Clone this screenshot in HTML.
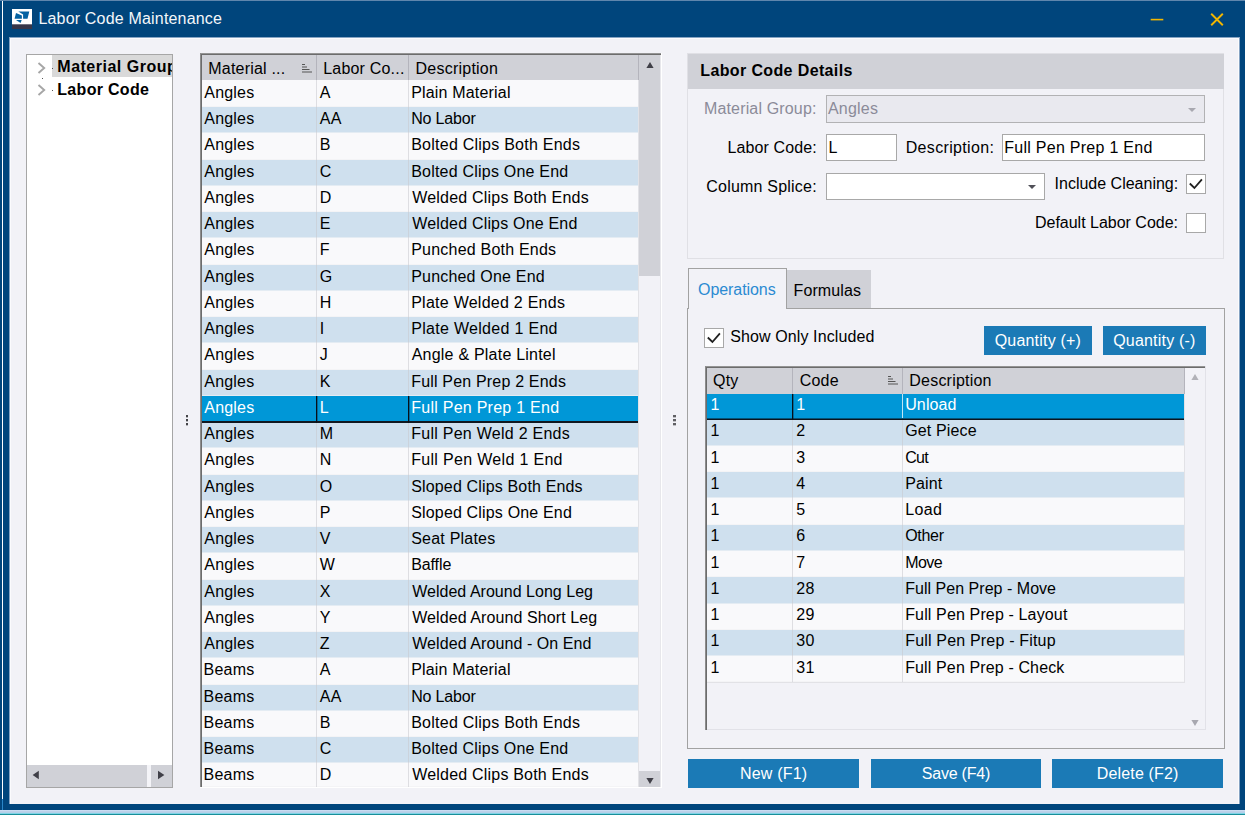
<!DOCTYPE html>
<html><head><meta charset="utf-8"><title>Labor Code Maintenance</title>
<style>
html,body{margin:0;padding:0;}
body{width:1245px;height:815px;overflow:hidden;background:#00457c;position:relative;font-family:"Liberation Sans",sans-serif;font-size:16px;color:#000;}
div{position:absolute;box-sizing:border-box;}
.t{position:absolute;white-space:nowrap;line-height:20px;display:block;letter-spacing:0.2px;}
svg{position:absolute;overflow:visible;}
</style></head><body>

<div style="left:0px;top:0px;width:1245px;height:1px;background:#5f86ad;"></div>
<div style="left:2px;top:1px;width:1px;height:798px;background:#ffffff;"></div>
<div style="left:2px;top:799px;width:1px;height:11px;background:#2a86c8;"></div>
<div style="left:0px;top:810px;width:1245px;height:1px;background:#c9dcf2;"></div>
<div style="left:0px;top:811px;width:1245px;height:1px;background:#bed1ea;"></div>
<div style="left:0px;top:812px;width:1245px;height:1px;background:#b6d0e8;"></div>
<div style="left:0px;top:813px;width:1245px;height:1px;background:#7ed3e6;"></div>
<div style="left:0px;top:814px;width:1245px;height:1px;background:#188e99;"></div>
<div style="left:9px;top:37px;width:1231px;height:767px;background:#86a4c4;"></div>
<div style="left:10px;top:38px;width:1229px;height:766px;background:#f2f2f7;"></div>
<div style="left:10px;top:38px;width:1229px;height:1px;background:#fbfbfd;"></div>
<div style="left:1238px;top:38px;width:1px;height:766px;background:#fbfbfd;"></div>
<div style="left:10px;top:38px;width:1px;height:766px;background:#fbfbfd;"></div>
<div style="left:12px;top:9px;width:20px;height:20px;background:#fff;"></div>
<div style="left:12px;top:24px;width:20px;height:5px;background:linear-gradient(#9a9aa6 0,#363649 1.2px);"></div>
<svg style="left:12px;top:9px" width="20" height="16" viewBox="0 0 20 16"><path d="M4 4 L9.9 6.4 L9.9 9.8 L2.6 9.8 Z" fill="#0562a2"/><path d="M6.3 2.6 L17.3 2.6 L15.5 9.8 L11.1 9.8 L11.1 5.6 Z" fill="#0562a2"/><path d="M4 11.1 L9.7 11.1 L8.6 14 Z" fill="#0562a2"/></svg>
<span class="t" style="left:38.4px;top:8.75px;font-size:16px;color:#f4f7fa;letter-spacing:0.185px;">Labor Code Maintenance</span>
<svg style="left:1150px;top:12px" width="80" height="16" viewBox="0 0 80 16"><path d="M0.7 7.6 H13.3" stroke="#f2b600" stroke-width="1.6" fill="none"/><path d="M61.2 1.8 L72.8 13.2 M72.8 1.8 L61.2 13.2" stroke="#f2b600" stroke-width="1.9" fill="none"/></svg>
<div style="left:26px;top:54px;width:147px;height:734px;background:#fff;border:1px solid #a6a6a6;"></div>
<div style="left:52px;top:55px;width:120px;height:22px;background:#d9d9d9;"></div>
<svg style="left:37px;top:61.7px" width="9" height="12" viewBox="0 0 9 12"><path d="M1.5 1 L7.2 6 L1.5 11" stroke="#a6a6a6" stroke-width="1.9" fill="none"/></svg>
<svg style="left:37px;top:84.3px" width="9" height="12" viewBox="0 0 9 12"><path d="M1.5 1 L7.2 6 L1.5 11" stroke="#a6a6a6" stroke-width="1.9" fill="none"/></svg>
<div style="left:52px;top:68px;width:1px;height:1px;background:#555;"></div>
<div style="left:52px;top:90px;width:1px;height:1px;background:#555;"></div>
<div style="left:42px;top:78px;width:1px;height:1px;background:#555;"></div>
<div style="left:57px;top:55px;width:115px;height:46px;overflow:hidden;">
<span class="t" style="left:0.3px;top:1.75px;font-size:16px;font-weight:bold;letter-spacing:0.5px;">Material Group</span>
<span class="t" style="left:0.3px;top:24.75px;font-size:16px;font-weight:bold;letter-spacing:0.3px;">Labor Code</span>
</div>
<div style="left:27px;top:765px;width:145px;height:22px;background:#d0d1d7;"></div>
<div style="left:147px;top:765px;width:4px;height:22px;background:#f4f4f8;"></div>
<svg style="left:32px;top:770.4px" width="8" height="10" viewBox="0 0 8 10"><path d="M6.8 0.8 L6.8 9.2 L0.6 5 Z" fill="#404048"/></svg>
<svg style="left:157px;top:770.4px" width="8" height="10" viewBox="0 0 8 10"><path d="M1 0.8 L1 9.2 L7.4 5 Z" fill="#404048"/></svg>
<div style="left:186px;top:415px;width:2px;height:2px;background:#454548;"></div>
<div style="left:186px;top:417px;width:2px;height:1px;background:#454548;opacity:.35;"></div>
<div style="left:186px;top:419px;width:2px;height:2px;background:#454548;"></div>
<div style="left:186px;top:421px;width:2px;height:1px;background:#454548;opacity:.35;"></div>
<div style="left:186px;top:423px;width:2px;height:2px;background:#454548;"></div>
<div style="left:186px;top:425px;width:2px;height:1px;background:#454548;opacity:.35;"></div>
<div style="left:673px;top:415px;width:3px;height:2px;background:#606064;"></div>
<div style="left:673px;top:417px;width:3px;height:1px;background:#606064;opacity:.35;"></div>
<div style="left:673px;top:419px;width:3px;height:2px;background:#606064;"></div>
<div style="left:673px;top:421px;width:3px;height:1px;background:#606064;opacity:.35;"></div>
<div style="left:673px;top:423px;width:3px;height:2px;background:#606064;"></div>
<div style="left:673px;top:425px;width:3px;height:1px;background:#606064;opacity:.35;"></div>
<div style="left:200px;top:53px;width:461px;height:734px;background:#f2f2f7;"></div>
<div style="left:661px;top:53px;width:1px;height:735px;background:#fff;"></div>
<div style="left:660px;top:55px;width:1px;height:732px;background:#e7e7eb;"></div>
<div style="left:200px;top:787px;width:462px;height:1px;background:#fff;"></div>
<div style="left:202px;top:55px;width:458px;height:25px;background:#d0d1d7;"></div>
<div style="left:200px;top:53px;width:461px;height:1px;background:#949494;"></div>
<div style="left:200px;top:54px;width:461px;height:1px;background:#6c6c6c;"></div>
<div style="left:200px;top:53px;width:1px;height:734px;background:#8c8c8c;"></div>
<div style="left:201px;top:54px;width:1px;height:733px;background:#6c6c6c;"></div>
<div style="left:202px;top:80px;width:437px;height:27px;background:#f9f9fb;"></div>
<div style="left:202px;top:106px;width:437px;height:1px;background:#f4f4f6;"></div>
<span class="t" style="left:204.3px;top:82.75px;font-size:16px;color:#000;">Angles</span>
<span class="t" style="left:319.8px;top:82.75px;font-size:16px;color:#000;">A</span>
<span class="t" style="left:411.2px;top:82.75px;font-size:16px;color:#000;letter-spacing:0.179px;">Plain Material</span>
<div style="left:202px;top:107px;width:437px;height:26px;background:#cfe0ee;"></div>
<div style="left:202px;top:132px;width:437px;height:1px;background:#e4ecf3;"></div>
<span class="t" style="left:204.3px;top:108.75px;font-size:16px;color:#000;">Angles</span>
<span class="t" style="left:319.8px;top:108.75px;font-size:16px;color:#000;">AA</span>
<span class="t" style="left:411.2px;top:108.75px;font-size:16px;color:#000;letter-spacing:-0.185px;">No Labor</span>
<div style="left:202px;top:133px;width:437px;height:27px;background:#f9f9fb;"></div>
<div style="left:202px;top:159px;width:437px;height:1px;background:#f4f4f6;"></div>
<span class="t" style="left:204.3px;top:134.75px;font-size:16px;color:#000;">Angles</span>
<span class="t" style="left:319.8px;top:134.75px;font-size:16px;color:#000;">B</span>
<span class="t" style="left:411.2px;top:134.75px;font-size:16px;color:#000;letter-spacing:0.245px;">Bolted Clips Both Ends</span>
<div style="left:202px;top:160px;width:437px;height:26px;background:#cfe0ee;"></div>
<div style="left:202px;top:185px;width:437px;height:1px;background:#e4ecf3;"></div>
<span class="t" style="left:204.3px;top:161.75px;font-size:16px;color:#000;">Angles</span>
<span class="t" style="left:319.8px;top:161.75px;font-size:16px;color:#000;">C</span>
<span class="t" style="left:411.2px;top:161.75px;font-size:16px;color:#000;letter-spacing:0.212px;">Bolted Clips One End</span>
<div style="left:202px;top:186px;width:437px;height:26px;background:#f9f9fb;"></div>
<div style="left:202px;top:211px;width:437px;height:1px;background:#f4f4f6;"></div>
<span class="t" style="left:204.3px;top:187.75px;font-size:16px;color:#000;">Angles</span>
<span class="t" style="left:319.8px;top:187.75px;font-size:16px;color:#000;">D</span>
<span class="t" style="left:412.2px;top:187.75px;font-size:16px;color:#000;letter-spacing:0.203px;">Welded Clips Both Ends</span>
<div style="left:202px;top:212px;width:437px;height:26px;background:#cfe0ee;"></div>
<div style="left:202px;top:237px;width:437px;height:1px;background:#e4ecf3;"></div>
<span class="t" style="left:204.3px;top:213.75px;font-size:16px;color:#000;">Angles</span>
<span class="t" style="left:319.8px;top:213.75px;font-size:16px;color:#000;">E</span>
<span class="t" style="left:412.2px;top:213.75px;font-size:16px;color:#000;letter-spacing:0.186px;">Welded Clips One End</span>
<div style="left:202px;top:238px;width:437px;height:27px;background:#f9f9fb;"></div>
<div style="left:202px;top:264px;width:437px;height:1px;background:#f4f4f6;"></div>
<span class="t" style="left:204.3px;top:239.75px;font-size:16px;color:#000;">Angles</span>
<span class="t" style="left:319.8px;top:239.75px;font-size:16px;color:#000;">F</span>
<span class="t" style="left:411.2px;top:239.75px;font-size:16px;color:#000;letter-spacing:0.216px;">Punched Both Ends</span>
<div style="left:202px;top:265px;width:437px;height:26px;background:#cfe0ee;"></div>
<div style="left:202px;top:290px;width:437px;height:1px;background:#e4ecf3;"></div>
<span class="t" style="left:204.3px;top:266.75px;font-size:16px;color:#000;">Angles</span>
<span class="t" style="left:319.8px;top:266.75px;font-size:16px;color:#000;">G</span>
<span class="t" style="left:411.2px;top:266.75px;font-size:16px;color:#000;letter-spacing:0.195px;">Punched One End</span>
<div style="left:202px;top:291px;width:437px;height:26px;background:#f9f9fb;"></div>
<div style="left:202px;top:316px;width:437px;height:1px;background:#f4f4f6;"></div>
<span class="t" style="left:204.3px;top:292.75px;font-size:16px;color:#000;">Angles</span>
<span class="t" style="left:319.8px;top:292.75px;font-size:16px;color:#000;">H</span>
<span class="t" style="left:411.2px;top:292.75px;font-size:16px;color:#000;letter-spacing:0.254px;">Plate Welded 2 Ends</span>
<div style="left:202px;top:317px;width:437px;height:26px;background:#cfe0ee;"></div>
<div style="left:202px;top:342px;width:437px;height:1px;background:#e4ecf3;"></div>
<span class="t" style="left:204.3px;top:318.75px;font-size:16px;color:#000;">Angles</span>
<span class="t" style="left:319.8px;top:318.75px;font-size:16px;color:#000;">I</span>
<span class="t" style="left:411.2px;top:318.75px;font-size:16px;color:#000;letter-spacing:0.304px;">Plate Welded 1 End</span>
<div style="left:202px;top:343px;width:437px;height:27px;background:#f9f9fb;"></div>
<div style="left:202px;top:369px;width:437px;height:1px;background:#f4f4f6;"></div>
<span class="t" style="left:204.3px;top:344.75px;font-size:16px;color:#000;">Angles</span>
<span class="t" style="left:319.8px;top:344.75px;font-size:16px;color:#000;">J</span>
<span class="t" style="left:411.7px;top:344.75px;font-size:16px;color:#000;letter-spacing:0.221px;">Angle &amp; Plate Lintel</span>
<div style="left:202px;top:370px;width:437px;height:26px;background:#cfe0ee;"></div>
<div style="left:202px;top:395px;width:437px;height:1px;background:#e4ecf3;"></div>
<span class="t" style="left:204.3px;top:371.75px;font-size:16px;color:#000;">Angles</span>
<span class="t" style="left:319.8px;top:371.75px;font-size:16px;color:#000;">K</span>
<span class="t" style="left:411.2px;top:371.75px;font-size:16px;color:#000;letter-spacing:0.184px;">Full Pen Prep 2 Ends</span>
<div style="left:202px;top:396px;width:437px;height:26px;background:#0097d7;"></div>
<span class="t" style="left:204.3px;top:397.75px;font-size:16px;color:#fff;">Angles</span>
<span class="t" style="left:319.8px;top:397.75px;font-size:16px;color:#fff;">L</span>
<span class="t" style="left:411.2px;top:397.75px;font-size:16px;color:#fff;letter-spacing:0.261px;">Full Pen Prep 1 End</span>
<div style="left:202px;top:422px;width:437px;height:26px;background:#cfe0ee;"></div>
<div style="left:202px;top:447px;width:437px;height:1px;background:#e4ecf3;"></div>
<span class="t" style="left:204.3px;top:423.75px;font-size:16px;color:#000;">Angles</span>
<span class="t" style="left:319.8px;top:423.75px;font-size:16px;color:#000;">M</span>
<span class="t" style="left:411.2px;top:423.75px;font-size:16px;color:#000;letter-spacing:0.265px;">Full Pen Weld 2 Ends</span>
<div style="left:202px;top:448px;width:437px;height:27px;background:#f9f9fb;"></div>
<div style="left:202px;top:474px;width:437px;height:1px;background:#f4f4f6;"></div>
<span class="t" style="left:204.3px;top:449.75px;font-size:16px;color:#000;">Angles</span>
<span class="t" style="left:319.8px;top:449.75px;font-size:16px;color:#000;">N</span>
<span class="t" style="left:411.2px;top:449.75px;font-size:16px;color:#000;letter-spacing:0.319px;">Full Pen Weld 1 End</span>
<div style="left:202px;top:475px;width:437px;height:26px;background:#cfe0ee;"></div>
<div style="left:202px;top:500px;width:437px;height:1px;background:#e4ecf3;"></div>
<span class="t" style="left:204.3px;top:476.75px;font-size:16px;color:#000;">Angles</span>
<span class="t" style="left:319.8px;top:476.75px;font-size:16px;color:#000;">O</span>
<span class="t" style="left:411.2px;top:476.75px;font-size:16px;color:#000;letter-spacing:0.157px;">Sloped Clips Both Ends</span>
<div style="left:202px;top:501px;width:437px;height:26px;background:#f9f9fb;"></div>
<div style="left:202px;top:526px;width:437px;height:1px;background:#f4f4f6;"></div>
<span class="t" style="left:204.3px;top:502.75px;font-size:16px;color:#000;">Angles</span>
<span class="t" style="left:319.8px;top:502.75px;font-size:16px;color:#000;">P</span>
<span class="t" style="left:411.2px;top:502.75px;font-size:16px;color:#000;letter-spacing:0.167px;">Sloped Clips One End</span>
<div style="left:202px;top:527px;width:437px;height:26px;background:#cfe0ee;"></div>
<div style="left:202px;top:552px;width:437px;height:1px;background:#e4ecf3;"></div>
<span class="t" style="left:204.3px;top:528.75px;font-size:16px;color:#000;">Angles</span>
<span class="t" style="left:319.8px;top:528.75px;font-size:16px;color:#000;">V</span>
<span class="t" style="left:411.2px;top:528.75px;font-size:16px;color:#000;letter-spacing:0.217px;">Seat Plates</span>
<div style="left:202px;top:553px;width:437px;height:27px;background:#f9f9fb;"></div>
<div style="left:202px;top:579px;width:437px;height:1px;background:#f4f4f6;"></div>
<span class="t" style="left:204.3px;top:554.75px;font-size:16px;color:#000;">Angles</span>
<span class="t" style="left:319.8px;top:554.75px;font-size:16px;color:#000;">W</span>
<span class="t" style="left:411.2px;top:554.75px;font-size:16px;color:#000;letter-spacing:-0.105px;">Baffle</span>
<div style="left:202px;top:580px;width:437px;height:26px;background:#cfe0ee;"></div>
<div style="left:202px;top:605px;width:437px;height:1px;background:#e4ecf3;"></div>
<span class="t" style="left:204.3px;top:581.75px;font-size:16px;color:#000;">Angles</span>
<span class="t" style="left:319.8px;top:581.75px;font-size:16px;color:#000;">X</span>
<span class="t" style="left:412.2px;top:581.75px;font-size:16px;color:#000;letter-spacing:0.025px;">Welded Around Long Leg</span>
<div style="left:202px;top:606px;width:437px;height:26px;background:#f9f9fb;"></div>
<div style="left:202px;top:631px;width:437px;height:1px;background:#f4f4f6;"></div>
<span class="t" style="left:204.3px;top:607.75px;font-size:16px;color:#000;">Angles</span>
<span class="t" style="left:319.8px;top:607.75px;font-size:16px;color:#000;">Y</span>
<span class="t" style="left:412.2px;top:607.75px;font-size:16px;color:#000;letter-spacing:0.090px;">Welded Around Short Leg</span>
<div style="left:202px;top:632px;width:437px;height:26px;background:#cfe0ee;"></div>
<div style="left:202px;top:657px;width:437px;height:1px;background:#e4ecf3;"></div>
<span class="t" style="left:204.3px;top:633.75px;font-size:16px;color:#000;">Angles</span>
<span class="t" style="left:319.8px;top:633.75px;font-size:16px;color:#000;">Z</span>
<span class="t" style="left:412.2px;top:633.75px;font-size:16px;color:#000;letter-spacing:0.082px;">Welded Around - On End</span>
<div style="left:202px;top:658px;width:437px;height:27px;background:#f9f9fb;"></div>
<div style="left:202px;top:684px;width:437px;height:1px;background:#f4f4f6;"></div>
<span class="t" style="left:203.6px;top:659.75px;font-size:16px;color:#000;">Beams</span>
<span class="t" style="left:319.8px;top:659.75px;font-size:16px;color:#000;">A</span>
<span class="t" style="left:411.2px;top:659.75px;font-size:16px;color:#000;letter-spacing:0.179px;">Plain Material</span>
<div style="left:202px;top:685px;width:437px;height:26px;background:#cfe0ee;"></div>
<div style="left:202px;top:710px;width:437px;height:1px;background:#e4ecf3;"></div>
<span class="t" style="left:203.6px;top:686.75px;font-size:16px;color:#000;">Beams</span>
<span class="t" style="left:319.8px;top:686.75px;font-size:16px;color:#000;">AA</span>
<span class="t" style="left:411.2px;top:686.75px;font-size:16px;color:#000;letter-spacing:-0.185px;">No Labor</span>
<div style="left:202px;top:711px;width:437px;height:26px;background:#f9f9fb;"></div>
<div style="left:202px;top:736px;width:437px;height:1px;background:#f4f4f6;"></div>
<span class="t" style="left:203.6px;top:712.75px;font-size:16px;color:#000;">Beams</span>
<span class="t" style="left:319.8px;top:712.75px;font-size:16px;color:#000;">B</span>
<span class="t" style="left:411.2px;top:712.75px;font-size:16px;color:#000;letter-spacing:0.245px;">Bolted Clips Both Ends</span>
<div style="left:202px;top:737px;width:437px;height:26px;background:#cfe0ee;"></div>
<div style="left:202px;top:762px;width:437px;height:1px;background:#e4ecf3;"></div>
<span class="t" style="left:203.6px;top:738.75px;font-size:16px;color:#000;">Beams</span>
<span class="t" style="left:319.8px;top:738.75px;font-size:16px;color:#000;">C</span>
<span class="t" style="left:411.2px;top:738.75px;font-size:16px;color:#000;letter-spacing:0.212px;">Bolted Clips One End</span>
<div style="left:202px;top:763px;width:437px;height:24px;background:#f9f9fb;"></div>
<div style="left:202px;top:786px;width:437px;height:1px;background:#f4f4f6;"></div>
<span class="t" style="left:203.6px;top:764.75px;font-size:16px;color:#000;">Beams</span>
<span class="t" style="left:319.8px;top:764.75px;font-size:16px;color:#000;">D</span>
<span class="t" style="left:412.2px;top:764.75px;font-size:16px;color:#000;letter-spacing:0.203px;">Welded Clips Both Ends</span>
<div style="left:316px;top:55px;width:1px;height:25px;background:#b4b4bc;"></div>
<div style="left:316px;top:80px;width:1px;height:316px;background:rgba(200,200,205,.55);"></div>
<div style="left:316px;top:423px;width:1px;height:364px;background:rgba(200,200,205,.55);"></div>
<div style="left:408px;top:55px;width:1px;height:25px;background:#b4b4bc;"></div>
<div style="left:408px;top:80px;width:1px;height:316px;background:rgba(200,200,205,.55);"></div>
<div style="left:408px;top:423px;width:1px;height:364px;background:rgba(200,200,205,.55);"></div>
<div style="left:202px;top:421px;width:437px;height:2px;background:#101820;"></div>
<div style="left:638px;top:396px;width:1px;height:27px;background:#081018;"></div>
<div style="left:316px;top:396px;width:1px;height:27px;background:#081018;"></div>
<div style="left:317px;top:396px;width:1px;height:25px;background:rgba(0,20,40,.35);"></div>
<div style="left:408px;top:396px;width:1px;height:27px;background:#081018;"></div>
<div style="left:409px;top:396px;width:1px;height:25px;background:rgba(0,20,40,.35);"></div>
<div style="left:638px;top:55px;width:1px;height:25px;background:#b4b4bc;"></div>
<div style="left:638px;top:80px;width:1px;height:707px;background:#e2e2e6;"></div>
<span class="t" style="left:208.3px;top:58.75px;font-size:16px;">Material ...</span>
<span class="t" style="left:323.2px;top:58.75px;font-size:16px;">Labor Co...</span>
<span class="t" style="left:415.5px;top:58.75px;font-size:16px;letter-spacing:0.237px;">Description</span>
<svg style="left:302px;top:64px" width="10" height="9" viewBox="0 0 10 9"><path d="M0 0.5 H3 M0 3 H5 M0 5.5 H7.5 M0 8 H10" stroke="#555" stroke-width="1" fill="none"/></svg>
<div style="left:639px;top:55px;width:21px;height:221px;background:#d0d1d7;"></div>
<div style="left:639px;top:771px;width:21px;height:16px;background:#d0d1d7;"></div>
<svg style="left:646px;top:62px" width="8" height="6" viewBox="0 0 8 6"><path d="M4 0 L7.6 6 L0.4 6 Z" fill="#404048"/></svg>
<svg style="left:646px;top:777.5px" width="8" height="6" viewBox="0 0 8 6"><path d="M0.4 0 L7.6 0 L4 6 Z" fill="#404048"/></svg>
<div style="left:687px;top:53px;width:537px;height:206px;border:1px solid #e0e0e5;background:#f2f2f7;"></div>
<div style="left:688px;top:53.5px;width:536px;height:35px;background:#d0d1d7;"></div>
<span class="t" style="left:700.3px;top:60.75px;font-size:16px;font-weight:bold;letter-spacing:0.37px;">Labor Code Details</span>
<span class="t" style="right:428.44430803571436px;top:98.75px;font-size:16px;color:#8b8b99;letter-spacing:0.156px;">Material Group:</span>
<div style="left:826px;top:95px;width:379px;height:27.5px;background:#e9e9ef;border:1px solid #b2b2b4;"></div>
<span class="t" style="left:828px;top:98.75px;font-size:16px;color:#8b8b99;">Angles</span>
<svg style="left:1188px;top:107.5px" width="8" height="4" viewBox="0 0 8 4"><path d="M0 0 L8 0 L4 4 Z" fill="#a8a8b0"/></svg>
<span class="t" style="right:428.30171874999996px;top:137.75px;font-size:16px;letter-spacing:0.098px;">Labor Code:</span>
<div style="left:826px;top:134px;width:71px;height:27px;background:#fff;border:1px solid #a8a8a8;"></div>
<span class="t" style="left:828.5px;top:137.75px;font-size:16px;">L</span>
<span class="t" style="left:905.7px;top:137.75px;font-size:16px;letter-spacing:0.334px;">Description:</span>
<div style="left:1002px;top:134px;width:203px;height:27px;background:#fff;border:1px solid #a8a8a8;"></div>
<span class="t" style="left:1004.3px;top:137.75px;font-size:16px;letter-spacing:0.267px;">Full Pen Prep 1 End</span>
<span class="t" style="right:428.1966346153846px;top:176.75px;font-size:16px;letter-spacing:0.203px;">Column Splice:</span>
<div style="left:826px;top:173px;width:218.5px;height:27px;background:#fff;border:1px solid #a8a8a8;"></div>
<svg style="left:1028px;top:185px" width="8" height="4" viewBox="0 0 8 4"><path d="M0 0 L8 0 L4 4 Z" fill="#505058"/></svg>
<span class="t" style="right:66.79970703124991px;top:173.75px;font-size:16px;letter-spacing:0.000px;">Include Cleaning:</span>
<div style="left:1186px;top:174px;width:20px;height:20px;background:#fff;border:1px solid #a8a8a8;"></div>
<svg style="left:1186px;top:174px" width="20" height="20" viewBox="0 0 20 20"><path d="M3.8 9.5 L8.4 14 L15.9 5.3" stroke="#202020" stroke-width="1.8" fill="none"/></svg>
<span class="t" style="right:67.00876736111104px;top:212.75px;font-size:16px;letter-spacing:-0.009px;">Default Labor Code:</span>
<div style="left:1186px;top:213px;width:20px;height:20px;background:#fff;border:1px solid #a8a8a8;"></div>
<div style="left:687px;top:308px;width:538px;height:441px;border:1px solid #a2a2a2;background:#f2f2f7;"></div>
<div style="left:688px;top:268px;width:99px;height:41px;border:1px solid #a2a2a2;border-bottom:none;background:#f2f2f7;"></div>
<div style="left:787px;top:269.5px;width:83.5px;height:38.5px;background:#d0d1d7;"></div>
<span class="t" style="left:698px;top:279.75px;font-size:16px;color:#2b8ad2;letter-spacing:-0.063px;">Operations</span>
<span class="t" style="left:793.5px;top:280.75px;font-size:16px;letter-spacing:0.117px;">Formulas</span>
<div style="left:704.4px;top:328px;width:20px;height:20px;background:#fff;border:1px solid #a8a8a8;"></div>
<svg style="left:704.4px;top:328.2px" width="20" height="20" viewBox="0 0 20 20"><path d="M3.8 9.5 L8.4 14 L15.9 5.3" stroke="#202020" stroke-width="1.8" fill="none"/></svg>
<span class="t" style="left:730.2px;top:326.75px;font-size:16px;letter-spacing:0.111px;">Show Only Included</span>
<div style="left:984px;top:326px;width:108px;height:29px;background:#1b7ab6;"></div>
<span class="t" style="left:837.9000000000001px;width:400px;text-align:center;top:330.75px;font-size:16px;color:#fff;">Quantity (+)</span>
<div style="left:1103px;top:326px;width:103px;height:29px;background:#1b7ab6;"></div>
<span class="t" style="left:954.4000000000001px;width:400px;text-align:center;top:330.75px;font-size:16px;color:#fff;">Quantity (-)</span>
<div style="left:705px;top:365.5px;width:501px;height:364px;background:#f2f2f7;border-right:1px solid #e2e2e8;border-bottom:1px solid #e2e2e8;"></div>
<div style="left:707px;top:367.5px;width:477px;height:26px;background:#d0d1d7;"></div>
<div style="left:705px;top:366px;width:500px;height:1px;background:#949494;"></div>
<div style="left:705px;top:367px;width:500px;height:1px;background:#6c6c6c;"></div>
<div style="left:705px;top:366px;width:1px;height:364px;background:#8c8c8c;"></div>
<div style="left:706px;top:367px;width:1px;height:363px;background:#6c6c6c;"></div>
<div style="left:707px;top:394px;width:477px;height:26px;background:#0097d7;"></div>
<span class="t" style="left:710.5px;top:394.75px;font-size:16px;color:#fff;">1</span>
<span class="t" style="left:796.3px;top:394.75px;font-size:16px;color:#fff;">1</span>
<span class="t" style="left:905.2px;top:394.75px;font-size:16px;color:#fff;letter-spacing:0.119px;">Unload</span>
<div style="left:707px;top:418px;width:477px;height:1px;background:rgba(8,16,24,.5);"></div>
<div style="left:707px;top:419px;width:477px;height:1px;background:#0c141c;"></div>
<div style="left:902px;top:394px;width:1px;height:24px;background:rgba(255,255,255,.75);"></div>
<div style="left:792px;top:394px;width:1px;height:26px;background:#081018;"></div>
<div style="left:793px;top:394px;width:1px;height:26px;background:rgba(0,20,40,.35);"></div>
<div style="left:707px;top:420px;width:477px;height:26px;background:#cfe0ee;"></div>
<div style="left:707px;top:445px;width:477px;height:1px;background:#e4ecf3;"></div>
<span class="t" style="left:710.5px;top:420.75px;font-size:16px;color:#000;">1</span>
<span class="t" style="left:796.3px;top:420.75px;font-size:16px;color:#000;">2</span>
<span class="t" style="left:905.2px;top:420.75px;font-size:16px;color:#000;letter-spacing:0.143px;">Get Piece</span>
<div style="left:707px;top:446px;width:477px;height:26px;background:#f9f9fb;"></div>
<div style="left:707px;top:471px;width:477px;height:1px;background:#f4f4f6;"></div>
<span class="t" style="left:710.5px;top:447.75px;font-size:16px;color:#000;">1</span>
<span class="t" style="left:796.3px;top:447.75px;font-size:16px;color:#000;">3</span>
<span class="t" style="left:905.2px;top:447.75px;font-size:16px;color:#000;letter-spacing:-0.727px;">Cut</span>
<div style="left:707px;top:472px;width:477px;height:26px;background:#cfe0ee;"></div>
<div style="left:707px;top:497px;width:477px;height:1px;background:#e4ecf3;"></div>
<span class="t" style="left:710.5px;top:473.75px;font-size:16px;color:#000;">1</span>
<span class="t" style="left:796.3px;top:473.75px;font-size:16px;color:#000;">4</span>
<span class="t" style="left:905.2px;top:473.75px;font-size:16px;color:#000;letter-spacing:0.119px;">Paint</span>
<div style="left:707px;top:498px;width:477px;height:27px;background:#f9f9fb;"></div>
<div style="left:707px;top:524px;width:477px;height:1px;background:#f4f4f6;"></div>
<span class="t" style="left:710.5px;top:499.75px;font-size:16px;color:#000;">1</span>
<span class="t" style="left:796.3px;top:499.75px;font-size:16px;color:#000;">5</span>
<span class="t" style="left:905.2px;top:499.75px;font-size:16px;color:#000;letter-spacing:0.335px;">Load</span>
<div style="left:707px;top:525px;width:477px;height:26px;background:#cfe0ee;"></div>
<div style="left:707px;top:550px;width:477px;height:1px;background:#e4ecf3;"></div>
<span class="t" style="left:710.5px;top:525.75px;font-size:16px;color:#000;">1</span>
<span class="t" style="left:796.3px;top:525.75px;font-size:16px;color:#000;">6</span>
<span class="t" style="left:905.2px;top:525.75px;font-size:16px;color:#000;letter-spacing:-0.297px;">Other</span>
<div style="left:707px;top:551px;width:477px;height:26px;background:#f9f9fb;"></div>
<div style="left:707px;top:576px;width:477px;height:1px;background:#f4f4f6;"></div>
<span class="t" style="left:710.5px;top:552.75px;font-size:16px;color:#000;">1</span>
<span class="t" style="left:796.3px;top:552.75px;font-size:16px;color:#000;">7</span>
<span class="t" style="left:905.2px;top:552.75px;font-size:16px;color:#000;letter-spacing:-0.576px;">Move</span>
<div style="left:707px;top:577px;width:477px;height:27px;background:#cfe0ee;"></div>
<div style="left:707px;top:603px;width:477px;height:1px;background:#e4ecf3;"></div>
<span class="t" style="left:710.5px;top:578.75px;font-size:16px;color:#000;">1</span>
<span class="t" style="left:796.3px;top:578.75px;font-size:16px;color:#000;">28</span>
<span class="t" style="left:905.2px;top:578.75px;font-size:16px;color:#000;letter-spacing:0.027px;">Full Pen Prep - Move</span>
<div style="left:707px;top:604px;width:477px;height:26px;background:#f9f9fb;"></div>
<div style="left:707px;top:629px;width:477px;height:1px;background:#f4f4f6;"></div>
<span class="t" style="left:710.5px;top:604.75px;font-size:16px;color:#000;">1</span>
<span class="t" style="left:796.3px;top:604.75px;font-size:16px;color:#000;">29</span>
<span class="t" style="left:905.2px;top:604.75px;font-size:16px;color:#000;letter-spacing:0.140px;">Full Pen Prep - Layout</span>
<div style="left:707px;top:630px;width:477px;height:26px;background:#cfe0ee;"></div>
<div style="left:707px;top:655px;width:477px;height:1px;background:#e4ecf3;"></div>
<span class="t" style="left:710.5px;top:630.75px;font-size:16px;color:#000;">1</span>
<span class="t" style="left:796.3px;top:630.75px;font-size:16px;color:#000;">30</span>
<span class="t" style="left:905.2px;top:630.75px;font-size:16px;color:#000;letter-spacing:0.184px;">Full Pen Prep - Fitup</span>
<div style="left:707px;top:656px;width:477px;height:26px;background:#f9f9fb;"></div>
<div style="left:707px;top:681px;width:477px;height:1px;background:#f4f4f6;"></div>
<span class="t" style="left:710.5px;top:657.75px;font-size:16px;color:#000;">1</span>
<span class="t" style="left:796.3px;top:657.75px;font-size:16px;color:#000;">31</span>
<span class="t" style="left:905.2px;top:657.75px;font-size:16px;color:#000;letter-spacing:0.130px;">Full Pen Prep - Check</span>
<div style="left:707px;top:682px;width:477px;height:1px;background:#e2e2e6;"></div>
<div style="left:792px;top:367.5px;width:1px;height:26px;background:#b4b4bc;"></div>
<div style="left:792px;top:420px;width:1px;height:262px;background:rgba(200,200,205,.55);"></div>
<div style="left:902px;top:367.5px;width:1px;height:26px;background:#b4b4bc;"></div>
<div style="left:902px;top:420px;width:1px;height:262px;background:rgba(200,200,205,.55);"></div>
<div style="left:1183.5px;top:367.5px;width:1px;height:26px;background:#b4b4bc;"></div>
<div style="left:1183.5px;top:393.5px;width:1px;height:289px;background:#e2e2e6;"></div>
<span class="t" style="left:713px;top:370.75px;font-size:16px;">Qty</span>
<span class="t" style="left:799.7px;top:370.75px;font-size:16px;">Code</span>
<span class="t" style="left:909.3px;top:370.75px;font-size:16px;letter-spacing:0.217px;">Description</span>
<svg style="left:888px;top:376px" width="10" height="9" viewBox="0 0 10 9"><path d="M0 0.5 H3 M0 3 H5 M0 5.5 H7.5 M0 8 H10" stroke="#555" stroke-width="1" fill="none"/></svg>
<svg style="left:1190.5px;top:374.4px" width="8" height="6" viewBox="0 0 8 6"><path d="M4 0 L7.6 6 L0.4 6 Z" fill="#b2b2b8"/></svg>
<svg style="left:1190.5px;top:720px" width="8" height="6" viewBox="0 0 8 6"><path d="M0.4 0 L7.6 0 L4 6 Z" fill="#a8a8b0"/></svg>
<div style="left:688px;top:759px;width:171.3px;height:28.5px;background:#1b7ab6;"></div>
<span class="t" style="left:573.65px;width:400px;text-align:center;top:763.75px;font-size:16px;color:#fff;letter-spacing:0.192px;">New (F1)</span>
<div style="left:870.8px;top:759px;width:170.2px;height:28.5px;background:#1b7ab6;"></div>
<span class="t" style="left:755.9px;width:400px;text-align:center;top:763.75px;font-size:16px;color:#fff;letter-spacing:-0.227px;">Save (F4)</span>
<div style="left:1052px;top:759px;width:171.3px;height:28.5px;background:#1b7ab6;"></div>
<span class="t" style="left:937.6500000000001px;width:400px;text-align:center;top:763.75px;font-size:16px;color:#fff;letter-spacing:0.170px;">Delete (F2)</span>
</body></html>
